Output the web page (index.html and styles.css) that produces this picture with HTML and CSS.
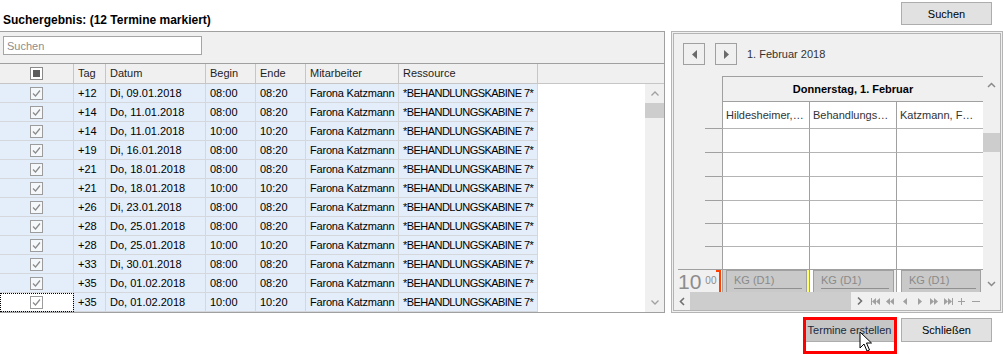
FILE: index.html
```html
<!DOCTYPE html>
<html>
<head>
    <meta charset="UTF-8">
    <title>Suchergebnis</title>
    <link rel="stylesheet" href="styles.css">
</head>
<body>

    <!-- Kopfzeile -->
    <div class="top">
        <div class="title">Suchergebnis: (12 Termine markiert)</div>
        <button class="btn btn-search">Suchen</button>
    </div>

    <div class="main">
        <!-- Ergebnisliste -->
        <div class="result">
            <div class="search-bar"><input class="search" placeholder="Suchen"></div>
            <div class="grid">
                <div class="row head">
                    <div class="cell chk">
                        <svg width="13" height="13"><rect x="0.5" y="0.5" width="12" height="12" fill="#fff" stroke="#8a8a8a"/><rect x="3" y="3" width="7" height="7" fill="#5c5c5c"/></svg>
                    </div>
                    <div class="cell">Tag</div>
                    <div class="cell">Datum</div>
                    <div class="cell">Begin</div>
                    <div class="cell">Ende</div>
                    <div class="cell">Mitarbeiter</div>
                    <div class="cell">Ressource</div>
                    <div class="cell fill"></div>
                </div>
                <div class="body">
                    <div class="rows">
                        <div class="row"><div class="cell chk"><svg width="13" height="13"><rect x="0.5" y="0.5" width="12" height="12" fill="#f5f8fb" stroke="#9c9c9c"/><polyline points="3,6.5 5.5,9 10,3.5" fill="none" stroke="#8a8a8a" stroke-width="1.2"/></svg></div><div class="cell">+12</div><div class="cell">Di, 09.01.2018</div><div class="cell">08:00</div><div class="cell">08:20</div><div class="cell name">Farona Katzmann</div><div class="cell res">*BEHANDLUNGSKABINE 7*</div><div class="cell fill"></div></div>
                        <div class="row"><div class="cell chk"><svg width="13" height="13"><rect x="0.5" y="0.5" width="12" height="12" fill="#f5f8fb" stroke="#9c9c9c"/><polyline points="3,6.5 5.5,9 10,3.5" fill="none" stroke="#8a8a8a" stroke-width="1.2"/></svg></div><div class="cell">+14</div><div class="cell">Do, 11.01.2018</div><div class="cell">08:00</div><div class="cell">08:20</div><div class="cell name">Farona Katzmann</div><div class="cell res">*BEHANDLUNGSKABINE 7*</div><div class="cell fill"></div></div>
                        <div class="row"><div class="cell chk"><svg width="13" height="13"><rect x="0.5" y="0.5" width="12" height="12" fill="#f5f8fb" stroke="#9c9c9c"/><polyline points="3,6.5 5.5,9 10,3.5" fill="none" stroke="#8a8a8a" stroke-width="1.2"/></svg></div><div class="cell">+14</div><div class="cell">Do, 11.01.2018</div><div class="cell">10:00</div><div class="cell">10:20</div><div class="cell name">Farona Katzmann</div><div class="cell res">*BEHANDLUNGSKABINE 7*</div><div class="cell fill"></div></div>
                        <div class="row"><div class="cell chk"><svg width="13" height="13"><rect x="0.5" y="0.5" width="12" height="12" fill="#f5f8fb" stroke="#9c9c9c"/><polyline points="3,6.5 5.5,9 10,3.5" fill="none" stroke="#8a8a8a" stroke-width="1.2"/></svg></div><div class="cell">+19</div><div class="cell">Di, 16.01.2018</div><div class="cell">08:00</div><div class="cell">08:20</div><div class="cell name">Farona Katzmann</div><div class="cell res">*BEHANDLUNGSKABINE 7*</div><div class="cell fill"></div></div>
                        <div class="row"><div class="cell chk"><svg width="13" height="13"><rect x="0.5" y="0.5" width="12" height="12" fill="#f5f8fb" stroke="#9c9c9c"/><polyline points="3,6.5 5.5,9 10,3.5" fill="none" stroke="#8a8a8a" stroke-width="1.2"/></svg></div><div class="cell">+21</div><div class="cell">Do, 18.01.2018</div><div class="cell">08:00</div><div class="cell">08:20</div><div class="cell name">Farona Katzmann</div><div class="cell res">*BEHANDLUNGSKABINE 7*</div><div class="cell fill"></div></div>
                        <div class="row"><div class="cell chk"><svg width="13" height="13"><rect x="0.5" y="0.5" width="12" height="12" fill="#f5f8fb" stroke="#9c9c9c"/><polyline points="3,6.5 5.5,9 10,3.5" fill="none" stroke="#8a8a8a" stroke-width="1.2"/></svg></div><div class="cell">+21</div><div class="cell">Do, 18.01.2018</div><div class="cell">10:00</div><div class="cell">10:20</div><div class="cell name">Farona Katzmann</div><div class="cell res">*BEHANDLUNGSKABINE 7*</div><div class="cell fill"></div></div>
                        <div class="row"><div class="cell chk"><svg width="13" height="13"><rect x="0.5" y="0.5" width="12" height="12" fill="#f5f8fb" stroke="#9c9c9c"/><polyline points="3,6.5 5.5,9 10,3.5" fill="none" stroke="#8a8a8a" stroke-width="1.2"/></svg></div><div class="cell">+26</div><div class="cell">Di, 23.01.2018</div><div class="cell">08:00</div><div class="cell">08:20</div><div class="cell name">Farona Katzmann</div><div class="cell res">*BEHANDLUNGSKABINE 7*</div><div class="cell fill"></div></div>
                        <div class="row"><div class="cell chk"><svg width="13" height="13"><rect x="0.5" y="0.5" width="12" height="12" fill="#f5f8fb" stroke="#9c9c9c"/><polyline points="3,6.5 5.5,9 10,3.5" fill="none" stroke="#8a8a8a" stroke-width="1.2"/></svg></div><div class="cell">+28</div><div class="cell">Do, 25.01.2018</div><div class="cell">08:00</div><div class="cell">08:20</div><div class="cell name">Farona Katzmann</div><div class="cell res">*BEHANDLUNGSKABINE 7*</div><div class="cell fill"></div></div>
                        <div class="row"><div class="cell chk"><svg width="13" height="13"><rect x="0.5" y="0.5" width="12" height="12" fill="#f5f8fb" stroke="#9c9c9c"/><polyline points="3,6.5 5.5,9 10,3.5" fill="none" stroke="#8a8a8a" stroke-width="1.2"/></svg></div><div class="cell">+28</div><div class="cell">Do, 25.01.2018</div><div class="cell">10:00</div><div class="cell">10:20</div><div class="cell name">Farona Katzmann</div><div class="cell res">*BEHANDLUNGSKABINE 7*</div><div class="cell fill"></div></div>
                        <div class="row"><div class="cell chk"><svg width="13" height="13"><rect x="0.5" y="0.5" width="12" height="12" fill="#f5f8fb" stroke="#9c9c9c"/><polyline points="3,6.5 5.5,9 10,3.5" fill="none" stroke="#8a8a8a" stroke-width="1.2"/></svg></div><div class="cell">+33</div><div class="cell">Di, 30.01.2018</div><div class="cell">08:00</div><div class="cell">08:20</div><div class="cell name">Farona Katzmann</div><div class="cell res">*BEHANDLUNGSKABINE 7*</div><div class="cell fill"></div></div>
                        <div class="row"><div class="cell chk"><svg width="13" height="13"><rect x="0.5" y="0.5" width="12" height="12" fill="#f5f8fb" stroke="#9c9c9c"/><polyline points="3,6.5 5.5,9 10,3.5" fill="none" stroke="#8a8a8a" stroke-width="1.2"/></svg></div><div class="cell">+35</div><div class="cell">Do, 01.02.2018</div><div class="cell">08:00</div><div class="cell">08:20</div><div class="cell name">Farona Katzmann</div><div class="cell res">*BEHANDLUNGSKABINE 7*</div><div class="cell fill"></div></div>
                        <div class="row"><div class="cell chk focus"><svg width="13" height="13"><rect x="0.5" y="0.5" width="12" height="12" fill="#fff" stroke="#9c9c9c"/><polyline points="3,6.5 5.5,9 10,3.5" fill="none" stroke="#8a8a8a" stroke-width="1.2"/></svg></div><div class="cell">+35</div><div class="cell">Do, 01.02.2018</div><div class="cell">10:00</div><div class="cell">10:20</div><div class="cell name">Farona Katzmann</div><div class="cell res">*BEHANDLUNGSKABINE 7*</div><div class="cell fill"></div></div>
                    </div>
                    <div class="vscroll">
                        <div class="arr"><svg width="8" height="5"><polyline points="0.5,4.5 4,1 7.5,4.5" fill="none" stroke="#a0a0a0" stroke-width="1.3"/></svg></div>
                        <div class="thumb"></div>
                        <div class="track"></div>
                        <div class="arr"><svg width="8" height="5"><polyline points="0.5,0.5 4,4 7.5,0.5" fill="none" stroke="#a0a0a0" stroke-width="1.3"/></svg></div>
                    </div>
                </div>
            </div>
        </div>

        <!-- Kalender -->
        <div class="cal">
            <div class="cal-in">
                <div class="cal-nav">
                    <div class="nav-btn"><svg width="5" height="9"><polygon points="5,0 0,4.5 5,9" fill="#6a6a6a"/></svg></div>
                    <div class="nav-btn"><svg width="5" height="9"><polygon points="0,0 5,4.5 0,9" fill="#6a6a6a"/></svg></div>
                    <div class="cal-date">1. Februar 2018</div>
                </div>
                <div class="sched">
                    <div class="day-head">Donnerstag, 1. Februar</div>
                    <div class="res-head">
                        <div>Hildesheimer,…</div>
                        <div>Behandlungs…</div>
                        <div>Katzmann, F…</div>
                    </div>
                    <div class="ruler">
                        <div></div><div></div><div></div><div></div><div></div><div></div>
                    </div>
                    <div class="slots">
                        <div></div><div></div><div></div>
                        <div></div><div></div><div></div>
                        <div></div><div></div><div></div>
                        <div></div><div></div><div></div>
                        <div></div><div></div><div></div>
                        <div></div><div></div><div></div>
                    </div>
                    <div class="vbar">
                        <div class="varr"><svg width="9" height="6"><polyline points="1,5 4.5,1.5 8,5" fill="none" stroke="#8a8a8a" stroke-width="1.5"/></svg></div>
                        <div class="vthumb"></div>
                        <div class="vtrack"></div>
                        <div class="varr"><svg width="9" height="6"><polyline points="1,1 4.5,4.5 8,1" fill="none" stroke="#8a8a8a" stroke-width="1.5"/></svg></div>
                    </div>
                    <div class="hour">
                        <div class="hour-label">
                            <span class="h">10</span><span class="m">00</span>
                            <span class="now"></span>
                        </div>
                        <div class="ap-col">
                            <span class="gap gap-gray"></span>
                            <div class="appt"><span>KG (D1)</span></div>
                            <span class="gap gap-yellow"></span>
                        </div>
                        <div class="ap-col">
                            <span class="gap gap-white"></span>
                            <div class="appt"><span>KG (D1)</span></div>
                        </div>
                        <div class="ap-col">
                            <span class="gap gap-white wide"></span>
                            <div class="appt narrow"><span>KG (D1)</span></div>
                        </div>
                    </div>
                    <div class="hscroll">
                        <div class="harr"><svg width="6" height="9"><polyline points="5,1 1.5,4.5 5,8" fill="none" stroke="#707070" stroke-width="1.6"/></svg></div>
                        <div class="hthumb"></div>
                        <svg class="hnav" width="149" height="18">
                            <polyline points="7,5.5 10.5,9 7,12.5" fill="none" stroke="#707070" stroke-width="1.6"/>
                            <g fill="#a0a0a0">
                                <rect x="20" y="6" width="1" height="7"/>
                                <polygon points="25,6 21,9.5 25,13"/><polygon points="29,6 25,9.5 29,13"/>
                                <polygon points="39,6 35,9.5 39,13"/><polygon points="43,6 39,9.5 43,13"/>
                                <polygon points="56,6 52,9.5 56,13"/>
                                <polygon points="67,6 71,9.5 67,13"/>
                                <polygon points="79,6 83,9.5 79,13"/><polygon points="83,6 87,9.5 83,13"/>
                                <polygon points="93,6 97,9.5 93,13"/><polygon points="97,6 101,9.5 97,13"/>
                                <rect x="101" y="6" width="1" height="7"/>
                                <rect x="107" y="9" width="7" height="1"/><rect x="110" y="6" width="1" height="7"/>
                                <rect x="121" y="9" width="8" height="1"/>
                            </g>
                        </svg>
                    </div>
                </div>
            </div>
        </div>
    </div>

    <!-- Buttons -->
    <div class="actions">
        <div class="mark">
            <button class="btn btn-create">Termine erstellen</button>
        </div>
        <button class="btn">Schließen</button>
    </div>

    <svg class="cursor" width="14" height="22">
        <path d="M1,1 L1,17 L5,13 L8,20 L10.5,19 L7.5,12 L12.5,12 Z" fill="#fff" stroke="#000" stroke-width="1"/>
    </svg>

</body>
</html>
```
FILE: styles.css
```css
* {
    margin: 0;
    padding: 0;
}

body {
    position: relative;
    width: 1003px;
    height: 354px;
    overflow: hidden;
    background: #fff;
    color: #000;
    font-family: "Liberation Sans", Arial, sans-serif;
    font-size: 11px;
}

/* Kopfzeile */
.top {
    display: flex;
    justify-content: space-between;
    height: 31px;
}

.title {
    margin: 13px 0 0 3px;
    font-size: 12px;
    font-weight: bold;
    line-height: 14px;
}

.btn {
    width: 91px;
    height: 24px;
    border: 1px solid #adadad;
    background: #e1e1e1;
    color: #000;
    font-family: inherit;
    font-size: 11px;
}

.btn-search {
    height: 23px;
    margin: 2px 11px 0 0;
}

.main {
    display: flex;
    gap: 6px;
    height: 282px;
}

/* Ergebnisliste */
.result {
    align-self: flex-start;
    width: 665px;
    box-sizing: border-box;
    border-top: 1px solid #a0a0a0;
    border-right: 1px solid #a0a0a0;
    background: #f0f0f0;
}

.search-bar {
    height: 31px;
    box-sizing: border-box;
    padding: 4px 3px;
}

.search {
    width: 199px;
    height: 19px;
    box-sizing: border-box;
    padding: 0 3px;
    border: 1px solid #a5a5a5;
    font-family: inherit;
    font-size: 11px;
}

.search::placeholder {
    color: #8d8d8d;
}

.grid {
    border-top: 1px solid #a0a0a0;
    border-bottom: 1px solid #a0a0a0;
    background: #fff;
}

.row {
    display: grid;
    grid-template-columns: 74px 32px 100px 50px 50px 93px 139px 1fr;
    height: 19px;
}

.cell {
    box-sizing: border-box;
    padding: 0 4px;
    border-right: 1px solid #d4d8dc;
    border-bottom: 1px solid #d4d8dc;
    background: #e3eefa;
    line-height: 18px;
    white-space: nowrap;
    overflow: hidden;
}

.cell.name {
    letter-spacing: -0.2px;
}

.cell.res {
    letter-spacing: -0.55px;
}

.head {
    height: 20px;
}

.head .cell {
    background: #f0f0f0;
    border-color: #c6c6c6;
    line-height: 19px;
    color: #1e1e1e;
}

.cell.fill {
    background: #fff;
    border: none;
}

.head .cell.fill {
    background: #f0f0f0;
    border-bottom: 1px solid #c6c6c6;
}

.chk {
    display: flex;
    align-items: center;
    justify-content: center;
}

.chk.focus {
    background: #fff;
    outline: 1px dotted #000;
    outline-offset: -1px;
}

.body {
    display: flex;
}

.rows {
    width: 645px;
}

.vscroll {
    display: flex;
    flex-direction: column;
    width: 19px;
    background: #f0f0f0;
}

.arr {
    display: flex;
    align-items: center;
    justify-content: center;
    height: 19px;
}

.thumb {
    height: 15px;
    background: #cdcdcd;
}

.track {
    flex: 1;
}

/* Kalender */
.cal {
    width: 332px;
    box-sizing: border-box;
    padding: 1px;
    border: 1px solid #b4b4b4;
    background: #f0f0f0;
}

.cal-in {
    height: 100%;
    box-sizing: border-box;
    border: 1px solid #b4b4b4;
}

.cal-nav {
    display: flex;
    align-items: center;
    gap: 10px;
    height: 31px;
    box-sizing: border-box;
    padding: 9px 0 0 9px;
}

.nav-btn {
    display: flex;
    align-items: center;
    justify-content: center;
    width: 22px;
    height: 22px;
    box-sizing: border-box;
    border: 1px solid #a0a0a0;
}

.cal-date {
    color: #333;
}

.sched {
    display: grid;
    grid-template-columns: 44px 261px 17px;
    grid-template-rows: 26px 26px 141px 23px 18px;
    margin: 11px 0 0 4px;
}

.day-head {
    grid-column: 2;
    grid-row: 1;
    border: 1px solid #a0a0a0;
    border-right: none;
    font-weight: bold;
    line-height: 24px;
    text-align: center;
}

.res-head {
    grid-column: 2;
    grid-row: 2;
    display: grid;
    grid-template-columns: repeat(3, 87px);
    background: #fff;
}

.res-head div {
    padding-left: 3px;
    border-left: 1px solid #a0a0a0;
    color: #333;
    line-height: 26px;
    white-space: nowrap;
    overflow: hidden;
}

.ruler {
    grid-column: 1;
    grid-row: 3;
    display: grid;
    grid-template-rows: 24px 24px 24px 23px 23px 23px;
    padding-left: 27px;
}

.ruler div {
    border-top: 1px solid #a0a0a0;
}

.slots {
    grid-column: 2;
    grid-row: 3;
    display: grid;
    grid-template-columns: repeat(3, 87px);
    grid-template-rows: 24px 24px 24px 23px 23px 23px;
    background: #fff;
}

.slots div {
    border-left: 1px solid #a0a0a0;
    border-top: 1px solid #b4b4b4;
}

.vbar {
    grid-column: 3;
    grid-row: 1 / 5;
    display: flex;
    flex-direction: column;
}

.varr {
    display: flex;
    align-items: center;
    justify-content: center;
    height: 17px;
}

.vthumb {
    height: 19px;
    margin-top: 40px;
    background: #cdcdcd;
}

.vtrack {
    flex: 1;
}

.hour {
    grid-column: 1 / 3;
    grid-row: 4;
    display: grid;
    grid-template-columns: 44px repeat(3, 87px);
    border-top: 1px solid #a0a0a0;
    overflow: hidden;
}

.hour-label {
    display: flex;
    align-items: flex-start;
    color: #8c8c8c;
}

.hour-label .h {
    margin-top: 3px;
    font-size: 21px;
    line-height: 18px;
}

.hour-label .m {
    margin: 6px 0 0 4px;
    font-size: 10px;
    line-height: 10px;
}

.now {
    align-self: stretch;
    width: 5px;
    margin-left: auto;
    margin-right: 1px;
    border-top: 2px solid #ff4000;
    border-right: 2px solid #ff4000;
    box-sizing: border-box;
}

.ap-col {
    display: flex;
    border-left: 1px solid #a0a0a0;
}

.gap {
    width: 3px;
}

.gap-gray {
    background: #cfcfcf;
}

.gap-yellow {
    width: 2px;
    background: #ffff66;
}

.gap-white {
    background: #fff;
}

.gap-white.wide {
    width: 4px;
}

.appt {
    width: 81px;
    box-sizing: border-box;
    padding: 0 4px 0 7px;
    border: 1px solid #a0a0a0;
    border-bottom: none;
    background: #c9c9c9;
    color: #8a8a8a;
}

.appt.narrow {
    width: 80px;
}

.appt span {
    display: block;
    margin-top: 2px;
    border-bottom: 1px solid #909090;
    line-height: 15px;
}

.hscroll {
    grid-column: 1 / 4;
    grid-row: 5;
    display: flex;
}

.harr {
    display: flex;
    align-items: center;
    width: 12px;
    padding-left: 1px;
    box-sizing: border-box;
}

.hthumb {
    width: 161px;
    background: #cdcdcd;
}

/* Buttons unten */
.actions {
    display: flex;
    justify-content: flex-end;
    gap: 6px;
    padding: 5px 11px 0 0;
}

.mark {
    position: relative;
}

.mark::after {
    content: "";
    position: absolute;
    top: -1px;
    left: -1px;
    right: -2px;
    bottom: -12px;
    border: 3px solid #f00;
}

.btn-create {
    display: block;
    background: #c6c6c6;
    color: #222a3a;
}

.cursor {
    position: absolute;
    left: 859px;
    top: 331px;
}
```
